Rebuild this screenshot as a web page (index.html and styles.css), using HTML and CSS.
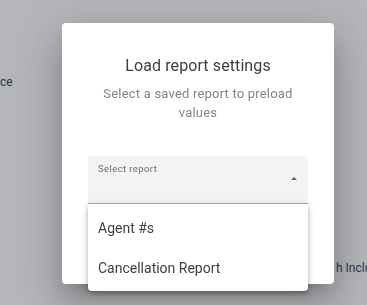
FILE: index.html
```html
<!DOCTYPE html>
<html>
<head>
<meta charset="utf-8">
<link rel="stylesheet" href="styles.css">
</head>
<body>
<div class="page">
  <div class="bg-left">ce</div>
  <div class="bg-right">h Inclu</div>
</div>
<div class="overlay">
  <div class="dialog">
    <h2 class="title">Load report settings</h2>
    <p class="subtitle">Select a saved report to preload values</p>
    <div class="select-wrap">
      <div class="select">
        <span class="select-label">Select report</span>
        <span class="caret"></span>
      </div>
      <ul class="menu">
        <li class="menu-item">Agent #s</li>
        <li class="menu-item">Cancellation Report</li>
      </ul>
    </div>
  </div>
</div>
</body>
</html>
```

FILE: styles.css
```css
* { box-sizing: border-box; }
html, body { margin: 0; padding: 0; }
body {
  width: 367px;
  height: 305px;
  overflow: hidden;
  font-family: Roboto, "Liberation Sans", sans-serif;
  background: #ffffff;
}
.page {
  height: 305px;
  position: relative;
  color: #22324a;
  font-size: 12px;
}
.bg-left {
  padding-top: 75px;
  padding-left: 0;
  line-height: 14px;
}
.bg-right {
  padding-top: 172px;
  padding-left: 336px;
  line-height: 14px;
  white-space: nowrap;
}
.overlay {
  position: fixed;
  inset: 0;
  background: rgba(90, 95, 102, 0.45);
  background: #b4b6b9;
  background: rgba(60, 64, 72, 0.38);
}
.dialog {
  position: absolute;
  left: 62px;
  top: 23px;
  width: 272px;
  height: 261px;
  background: #fff;
  border-radius: 4px;
  box-shadow: 0 11px 15px -7px rgba(0,0,0,.2), 0 24px 38px 3px rgba(0,0,0,.14), 0 9px 46px 8px rgba(0,0,0,.12);
  display: flex;
  flex-direction: column;
  align-items: center;
  padding: 32px 26px 0;
}
.title {
  margin: 0;
  font-size: 16px;
  font-weight: 400;
  line-height: 22px;
  color: #3c4043;
  letter-spacing: 0.1px;
}
.subtitle {
  margin: 7px 0 0;
  font-size: 13px;
  line-height: 19px;
  color: #80868b;
  text-align: center;
  letter-spacing: 0.2px;
  width: 200px;
}
.select-wrap {
  margin-top: 34px;
  width: 220px;
  position: relative;
}
.select {
  height: 48px;
  background: #f1f3f4;
  border-radius: 4px 4px 0 0;
  border-bottom: 1px solid #a6acb2;
  padding: 7px 10px 0;
  position: relative;
}
.select-label {
  display: block;
  font-size: 9.5px;
  line-height: 12px;
  color: #6b7075;
  letter-spacing: 0.4px;
}
.caret {
  position: absolute;
  right: 11px;
  top: 21px;
  width: 0;
  height: 0;
  border-left: 3.5px solid transparent;
  border-right: 3.5px solid transparent;
  border-bottom: 3.5px solid #5f6368;
}
.menu {
  list-style: none;
  margin: 0;
  padding: 4px 0 3px;
  background: #fff;
  border-radius: 0 0 4px 4px;
  box-shadow: 0 2px 4px -1px rgba(0,0,0,.2), 0 4px 5px 0 rgba(0,0,0,.14), 0 1px 10px 0 rgba(0,0,0,.12);
  position: absolute;
  left: 0;
  right: 0;
  top: 48px;
}
.menu-item {
  height: 40px;
  display: flex;
  align-items: center;
  padding: 0 10px;
  font-size: 14px;
  color: #3c4043;
}
```
